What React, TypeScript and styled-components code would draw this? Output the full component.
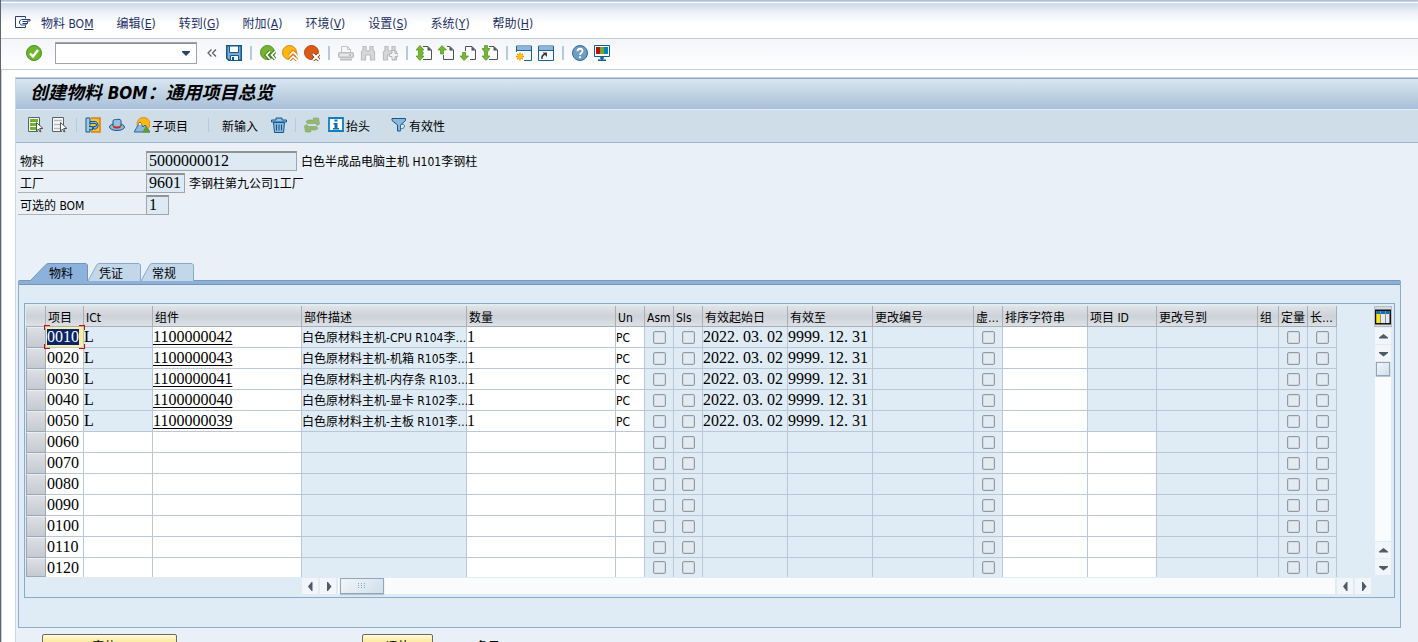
import React from 'react';
import styled, { createGlobalStyle, css } from 'styled-components';

const GlobalStyle = createGlobalStyle`
  * { box-sizing: border-box; }
  body {
    margin: 0;
    background: #e9f0f7;
    color: #000;
    font: 12px/16px 'DejaVu Sans Condensed', 'Noto Sans CJK SC', sans-serif;
  }
  button, input { font: inherit; color: inherit; }
`;

const Screen = styled.div`
  height: 100vh;
  overflow: hidden;
  display: flex;
  flex-direction: column;
  background: #fff;
  border-left: 1px solid #5f646c;
  box-shadow: inset 1px 0 0 #c9ccd2;
`;

const TopEdge = styled.div`
  flex: none;
  height: 4px;
  background: linear-gradient(#b3c1d3 0 1px, #c8d4e2 1px 2px, #fbfcfe 2px 3px, #d3deeb 3px 4px);
`;

const MenuBar = styled.nav`
  flex: none;
  height: 35px;
  display: flex;
  align-items: center;
  padding: 6px 0 0 14px;
  gap: 10px;
  background: linear-gradient(#cedaea, #ecf1f7 8px, #fff 20px);
  border-bottom: 1px solid #c6cad3;
  & > svg { margin-bottom: 4px; }
`;

const MenuList = styled.div`
  display: flex;
  gap: 23px;
`;

const MenuItem = styled.button`
  border: 0;
  padding: 0;
  background: none;
  color: #1c2f66;
  white-space: pre;
`;

const CommandBar = styled.div`
  flex: none;
  height: 31px;
  display: flex;
  align-items: center;
  gap: 6px;
  padding: 0 0 2px 25px;
  background: linear-gradient(#f3f5f9, #fff);
  border-bottom: 1px solid #c9cdd5;
`;

const IconButton = styled.button`
  flex: none;
  display: flex;
  width: 16px;
  height: 16px;
  border: 0;
  padding: 0;
  background: none;
  & > svg { display: block; }
`;

const Combo = styled.div`
  width: 142px;
  height: 22px;
  display: flex;
  align-items: center;
  margin: 0 1px 0 7px;
  padding: 0 5px 0 3px;
  border: 1px solid #a3a3a5;
  box-shadow: inset 0 1px 0 #8e9094;
  background: #fff;
`;

const ComboInput = styled.input`
  flex: 1;
  min-width: 0;
  border: 0;
  outline: 0;
  padding: 0;
  background: none;
`;

const Divider = styled.span<{ $wide?: boolean }>`
  flex: none;
  width: ${p => (p.$wide ? 2 : 1)}px;
  height: 14px;
  margin: 0 ${p => (p.$wide ? 2 : 0)}px;
  background: #b4cae0;
`;

const Workspace = styled.main`
  flex: 1;
  min-height: 0;
  margin: 7px 0 0 14px;
  border-left: 1px solid #ccd6e2;
  border-top: 1px solid #c5d0de;
  background: #e9f0f7;
`;

const TitleBar = styled.header`
  height: 32px;
  padding-left: 14px;
  border-top: 1px solid #93a8c0;
  border-bottom: 1px solid #e4edf5;
  background: linear-gradient(#d8e6f1, #c0d2e2 50%, #a9c0da);
`;

const Title = styled.h1`
  margin: 0;
  font: italic 700 18px/28px 'DejaVu Sans Condensed', 'Noto Sans CJK SC', sans-serif;
`;

const TitleLatin = styled.span`
  font-size: 17px;
`;

const AppBar = styled.div`
  height: 33px;
  display: flex;
  align-items: center;
  gap: 8px;
  padding: 0 0 2px 12px;
  background: #cfdde8;
  border-bottom: 1px solid #9fb5cb;
`;

const LabelButton = styled.button<{ $start?: number; $end?: number }>`
  flex: none;
  display: flex;
  align-items: center;
  gap: 2px;
  border: 0;
  padding: 0 ${p => p.$end ?? 0}px 0 ${p => p.$start ?? 0}px;
  background: none;
  & > span { padding-top: 3px; }
`;

const HeaderForm = styled.form`
  display: grid;
  gap: 2px;
  padding: 8px 0 0 2px;
`;

const FormRow = styled.div`
  height: 20px;
  display: flex;
`;

const FormLabel = styled.label`
  width: 128px;
  padding: 3px 0 0 2px;
  border-bottom: 1px solid #b0b3b6;
`;

const digits = css`
  font-family: 'Liberation Serif', 'Noto Sans CJK SC', serif;
  font-size: 16px;
`;

const FormField = styled.input<{ $width: number }>`
  ${digits}
  width: ${p => p.$width}px;
  height: 20px;
  padding: 0 2px 1px;
  border: 1px solid #a2a5a8;
  border-top: 2px solid #8f9396;
  outline: 0;
  background: #dde9f3;
`;

const FormText = styled.span`
  padding: 3px 0 0 4px;
`;

const TabStrip = styled.div`
  display: flex;
  margin: 48px 0 0 14px;
`;

const TabButton = styled.button<{ $width: number }>`
  display: grid;
  width: ${p => p.$width}px;
  height: 18px;
  border: 0;
  padding: 0;
  background: none;
  & > * { grid-area: 1 / 1; }
`;

const TabText = styled.span<{ $start: number }>`
  padding: 4px 0 0 ${p => p.$start}px;
  text-align: left;
  line-height: 14px;
`;

const TabPanel = styled.section`
  margin: 0 17px 0 2px;
  padding: 19px 5px 29px;
  border: 1px solid #8fadca;
  border-top: 3px solid #8eb0d6;
  border-radius: 2px 2px 0 0;
  box-shadow: inset 0 1px 0 #7395bb, 0 -1px 0 #7899bf;
  background: #dfebf5;
`;

const TableFrame = styled.div`
  border: 1px solid #8aaacb;
  padding: 2px 2px 3px 1px;
`;

const TableArea = styled.div`
  display: flex;
  justify-content: space-between;
`;

const Grid = styled.table`
  table-layout: fixed;
  width: 1311px;
  border-collapse: separate;
  border-spacing: 0;
`;

const HeadCell = styled.th`
  height: 21px;
  padding: 3px 0 0 2px;
  border-right: 1px solid #a5afbc;
  border-bottom: 1px solid #a5afbc;
  background: linear-gradient(#e1e4e6, #cdd2d9 50%, #dde1e4);
  font-weight: 400;
  text-align: left;
  line-height: 16px;
  white-space: nowrap;
  overflow: hidden;
`;

const RowCell = styled.td<{ $open?: boolean; $last?: boolean; $active?: boolean; $kind: string; $num?: boolean }>`
  position: relative;
  height: ${p => (p.$last ? 19 : 21)}px;
  padding: 0 0 0 ${p => (p.$kind === 'item' ? 1 : 0)}px;
  border-right: 1px solid #bac7d6;
  border-bottom: ${p => (p.$last ? 0 : 1)}px solid #bac7d6;
  background: ${p => (p.$active ? '#fdeea0' : p.$open ? '#fff' : '#dfebf5')};
  line-height: 16px;
  white-space: nowrap;
  ${p => p.$num && digits}
`;

const CellText = styled.span`
  display: block;
  padding-top: 2px;
`;

const Selector = styled.td`
  padding: 0;
  border: 1px solid #9ea7b4;
  border-top-color: #eceff2;
  background: linear-gradient(#dcdfe3, #c5cad2);
`;

const Corner = styled.i<{ $v: 'top' | 'bottom'; $h: 'left' | 'right' }>`
  position: absolute;
  z-index: 1;
  ${p => p.$v}: -2px;
  ${p => p.$h}: -2px;
  width: 6px;
  height: 5px;
  border: 0 solid #e00000;
  border-${p => p.$v}-width: 1px;
  border-${p => p.$h}-width: 1px;
`;

const Selected = styled.span`
  display: block;
  width: 32px;
  height: 16px;
  background: #0a246a;
  color: #fff;
`;

const CellLink = styled.a`
  color: #000;
  text-underline-offset: 2px;
`;

const DateText = styled.time`
  display: flex;
  gap: 4px;
`;

const Check = styled.input`
  appearance: none;
  display: block;
  width: 13px;
  height: 13px;
  margin: 0 auto;
  border: 1px solid #949a9e;
  border-radius: 2px;
  background: #e1ebf3;
  box-shadow: inset 0 0 0 1px #d2dbe2;
`;

const SideBar = styled.div`
  width: 18px;
  display: flex;
  flex-direction: column;
  align-items: center;
  gap: 1px;
  padding-bottom: 2px;
`;

const ConfigButton = styled.button`
  flex: none;
  width: 18px;
  height: 21px;
  padding: 0;
  border: 1px solid #b6bcc4;
  background: #d5dadf;
  display: grid;
  place-items: center;
`;

const ArrowButton = styled.button`
  flex: none;
  width: 16px;
  height: 16px;
  padding: 0;
  border: 0;
  background: #f2f6fa;
  display: grid;
  place-items: center;
`;

const Track = styled.div`
  flex: 1;
  background: #fafbfc;
`;

const Thumb = styled.div<{ $width: number; $height: number }>`
  flex: none;
  width: ${p => p.$width}px;
  height: ${p => p.$height}px;
  display: grid;
  place-items: center;
  border: 1px solid #93a6b8;
  background: linear-gradient(135deg, #f1f6fa, #d0dfea);
  box-shadow: 0 1px 1px #b9c4ce;
`;

const BottomScroll = styled.div`
  display: flex;
  gap: 2px;
  padding: 1px 21px 0 276px;
`;

const HorizontalTrack = styled(Track)`
  display: flex;
  padding-left: 2px;
`;

const Footer = styled.div`
  display: flex;
  align-items: flex-start;
  padding: 6px 0 0 26px;
`;

const FooterButton = styled.button<{ $width: number }>`
  width: ${p => p.$width}px;
  height: 22px;
  margin-right: 185px;
  padding: 4px 0 0;
  border: 1px solid #6c6a60;
  border-radius: 2px;
  background: linear-gradient(#fffbe0, #fdeeaa 5px, #f9e28a);
`;

const EntryInfo = styled.div`
  display: flex;
  gap: 8px;
  margin-left: -142px;
  padding-top: 5px;
`;

const EntryNumber = styled.span`
  width: 102px;
  text-align: right;
`;

/* ---------- icons ---------- */

const Icon = ({ children, w = 16, h = 16 }: { children: React.ReactNode; w?: number; h?: number }) => (
  <svg width={w} height={h} viewBox={`0 0 ${w} ${h}`} fill="none" aria-hidden="true">
    {children}
  </svg>
);

const MenuIcon = () => (
  <Icon w={16} h={12}>
    <path d="M10.500 2.500V.5H.5v11h10V9.500" stroke="#27406f" />
    <path d="M15 3.500H6.500L4.500 5v2.500l2 1.500H11V7.500h1.500V5.500H7.500M15 3.500v1.500h-3M7.500 7.500H11" stroke="#27406f" />
  </Icon>
);
const OkIcon = () => (
  <Icon>
    <circle cx="8" cy="8" r="7.500" fill="#6db52b" stroke="#4b8f22" />
    <path d="M4 8.500l3 3L12 5" stroke="#fff" strokeWidth="2.400" />
  </Icon>
);
const DropIcon = () => <Icon w={10} h={6}><path d="M1 1h8v1L5 6 1 2z" fill="#27406f" /></Icon>;
const CollapseIcon = () => (
  <Icon><path d="M7.500 4.500 4 8l3.500 3.500M12 4.500 8.500 8l3.500 3.500" stroke="#555a60" strokeWidth="1.200" /></Icon>
);
const SaveIcon = () => (
  <Icon>
    <path d="M.75.75h14.500v14.500H2.750L.75 13.250z" fill="#7fa9d0" stroke="#0f5a8c" strokeWidth="1.500" />
    <path d="M3.500 1h9v6.500h-9z" fill="#fff" stroke="#0f5a8c" />
    <path d="M4.500 10.500h8v5h-8z" fill="#eef4f9" stroke="#0f5a8c" />
    <path d="M6 12h2v3H6z" fill="#0f5a8c" />
  </Icon>
);
const BackIcon = () => (
  <Icon>
    <circle cx="7.500" cy="7.500" r="7" fill="#7ab32f" stroke="#4e8f25" />
    <path d="M10 6.500 6.500 10l3.500 4M15 6.500 11.500 10l3.500 4" stroke="#3f7d1d" strokeWidth="3.500" />
    <path d="M10 6.500 6.500 10l3.500 4M15 6.500 11.500 10l3.500 4" stroke="#fff" strokeWidth="1.700" />
  </Icon>
);
const ExitIcon = () => (
  <Icon>
    <circle cx="7.500" cy="7.500" r="7" fill="#fdb813" stroke="#d98a0b" />
    <path d="M7.500 10.500 11 7l4 3.500M7.500 15l3.500-3.500L15 15" stroke="#d9780b" strokeWidth="3.500" />
    <path d="M7.500 10.500 11 7l4 3.500M7.500 15l3.500-3.500L15 15" stroke="#fff" strokeWidth="1.700" />
  </Icon>
);
const CancelIcon = () => (
  <Icon>
    <circle cx="7.500" cy="7.500" r="7" fill="#d95b1c" stroke="#b5430f" />
    <path d="M9 9l6 6M15 9l-6 6" stroke="#9a3208" strokeWidth="3.800" />
    <path d="M9 9l6 6M15 9l-6 6" stroke="#fff" strokeWidth="2.200" />
  </Icon>
);
const PrintIcon = () => (
  <Icon>
    <path d="M3.500 8V1.500h6l3 3V8M9.500 1.500v3h3" fill="#f7f7f8" stroke="#c1c2c4" />
    <rect x=".75" y="7.750" width="14.500" height="4.500" rx="1" fill="#e8e8e9" stroke="#bcbdbf" strokeWidth="1.500" />
    <path d="M11 10h2M2 14.500h12" stroke="#bcbdbf" strokeWidth="2" />
  </Icon>
);
const binocular = 'M1.500 15V7l1.500-2V1.500h3V5l1 1h2l1-1V1.500h3V5l1.500 2v8h-4v-5H5.500v5z';
const FindIcon = () => <Icon><path d={binocular} fill="#d7d8d9" stroke="#bbbcbe" strokeWidth="1.200" /></Icon>;
const FindNextIcon = () => (
  <Icon>
    <path d={binocular} fill="#d7d8d9" stroke="#bbbcbe" strokeWidth="1.200" />
    <path d="M10 5.500h3v3h3v3h-3v3h-3v-3H7.500v-3H10z" fill="#f4f4f5" stroke="#b5b6b8" />
  </Icon>
);
type PageKind = 'first' | 'prev' | 'next' | 'last';
const pageArrows: Record<PageKind, string> = {
  first: 'M4 .5 8 5H5.500l2 3-2 3H8L4 15.500 0 11h2.500V5H0z',
  prev: 'M4 .5 8.500 5H5.500v4h-3V5H0z',
  next: 'M2.500 7.500h3V11H8.500L4 15.500 0 11h2.500z',
  last: 'M2.500 .5h3V3.500H8L5.500 7v4H8L4 15.500 0 11h2.500V7L0 3.500h2.500z',
};
const PageIcon = ({ kind }: { kind: PageKind }) => (
  <Icon>
    <path
      d={kind === 'prev' ? 'M5.500 10v4.500h10V5L12 1.500H9' : kind === 'next' ? 'M5.500 6V1.500H12L15.500 5v9.500H10' : 'M7 1.500h5L15.500 5v9.500H7'}
      fill="#fafbfc"
      stroke="#4f5357"
    />
    <path d="M11.500 1l4 4.500h-4z" fill="#4f5357" />
    <path d={pageArrows[kind]} fill="#78b82e" stroke="#4b8f22" strokeWidth=".7" />
  </Icon>
);
const NewWindowIcon = () => (
  <Icon>
    <path d="M.5 1h15v14.500H.5z" fill="#f3f7fb" stroke="#1c6194" />
    <path d="M1 1.500h14v4H1z" fill="#8fb6dc" />
    <path d="M0 5.500h16" stroke="#1c6194" />
    <path d="M-1 7h9v10h-9z" fill="#fff" />
    <path d="M4 7.500v8M0 11.500h8M1.200 8.700l5.600 5.600M6.800 8.700l-5.600 5.600" stroke="#f08a1d" strokeWidth="1.400" />
    <circle cx="4" cy="11.500" r="2.500" fill="#fdc300" />
  </Icon>
);
const ShortcutIcon = () => (
  <Icon>
    <path d="M.5 1h15v14.500H.5z" fill="#f6f9fc" stroke="#1c6194" />
    <path d="M1 1.500h14v4H1z" fill="#8fb6dc" />
    <path d="M0 5.500h16" stroke="#1c6194" />
    <path d="M4 14c-.5-3 .5-4 3-5" stroke="#3a3d40" strokeWidth="1.600" />
    <path d="M4.500 7.500H9V12z" fill="#3a3d40" />
  </Icon>
);
const HelpIcon = () => (
  <Icon>
    <circle cx="8" cy="8" r="7.500" fill="#6e9dc6" stroke="#2a6a9e" />
    <path d="M5.500 6.300C5.500 2.900 10.500 3 10.500 6c0 2-2.500 2-2.500 4M8 11.300v1.900" stroke="#fff" strokeWidth="1.800" />
  </Icon>
);
const MonitorIcon = () => (
  <Icon>
    <path d="M.5.500h15v11H.5z" fill="#fff" stroke="#0e5d93" />
    <path d="M2 2h4v7H2z" fill="#c00d0d" /><path d="M6 2h4v7H6z" fill="#6cae22" /><path d="M10 2h4v7h-4z" fill="#0a7fc4" />
    <path d="M6 13h4M8 12v3M4 15.300h8" stroke="#0e5d93" strokeWidth="1.500" />
  </Icon>
);
const SelectIcon = ({ on }: { on?: boolean }) => (
  <Icon>
    <path d="M10 14.500H.5V.5h11V8" fill="#f6f8fa" stroke="#5d6165" />
    <path d="M2 3.500h8M2 7.500h6M2 11.500h6" stroke={on ? '#6db52b' : '#b6babd'} strokeWidth={on ? 3 : 1.500} />
    <path d="M8.500 5.500v8.500l2-2 1.500 3 1-.5-1.300-3H15z" fill="#fff" stroke="#4f5357" />
  </Icon>
);
const LinkItemIcon = () => (
  <Icon>
    <path d="M6 1h9v14H6" fill="#fdc12c" stroke="#e07c12" strokeWidth="1.500" />
    <path d="M1 1h4v14H1z" fill="#a9c8e4" stroke="#0f5a8c" />
    <path d="M4 9.500h3.500V13L4 12.500M5 4.500h5.500a4 4 0 0 1 0 7.500H8.500V9.500h1.500a1.500 1.500 0 0 0 0-3H5z" fill="#8fb6dc" stroke="#0f5a8c" />
  </Icon>
);
const HatIcon = () => (
  <Icon>
    <ellipse cx="8" cy="10" rx="7.500" ry="3.500" fill="#8fb6dc" stroke="#0f5a8c" />
    <path d="M4 9V3.500C6 1.800 7 3 8 2.500S11 2 12 3.500V9c-2 2-6 2-8 0z" fill="#9bbfe0" stroke="#0f5a8c" />
    <path d="M4 8c2 2 6 2 8 0v2c-2 2-6 2-8 0z" fill="#c8300f" />
  </Icon>
);
const MountainIcon = () => (
  <Icon>
    <circle cx="9.500" cy="7" r="6.500" fill="#fdb813" stroke="#e8890c" />
    <path d="M0 15 6 5l3 5 2-2 5 7z" fill="#8fb6dc" stroke="#2a6a9e" />
    <path d="M8 15.500 12 9l4 6.500z" fill="#5c9f24" />
    <path d="M5 8l1-2 1 2" stroke="#fff" />
  </Icon>
);
const TrashIcon = () => (
  <Icon>
    <path d="M2.500 5.500h11l-1 10h-9z" fill="#8fb6dc" stroke="#0f5a8c" />
    <path d="M5.500 7.500v6M8 7.500v6M10.500 7.500v6" stroke="#0f5a8c" />
    <path d="M.5 5V3h4.500V1h6v2h4.500v2z" fill="#9bbfe0" stroke="#0f5a8c" />
  </Icon>
);
const SwapIcon = () => (
  <Icon>
    <path
      d="M2 4.500 4.500 3H10L9 1h5.500L15.500 7 13 8.500 12 6.500H3.500zM14 11.500 11.500 13H6l1 2H1.500L.5 9 3 7.500 4 9.500h8.500z"
      fill="#94b872"
      stroke="#7fa65c"
      strokeWidth=".6"
    />
  </Icon>
);
const InfoIcon = () => (
  <Icon>
    <path d="M1 1h14v13H1z" fill="#fff" stroke="#0a7fc4" strokeWidth="1.800" />
    <path d="M6.500 2.500h3v2h-3zM5.500 6h4v5H11v1.500H5V11h1.500V7.500h-1z" fill="#0f6fae" />
  </Icon>
);
const FunnelIcon = () => (
  <Icon>
    <path d="M1 1.500h13.500v2L9.500 8v6h-3V8L1 3.500z" fill="#8fb6dc" stroke="#0f5a8c" />
    <path d="M9.500 14V8c3-2 5 .5 3.500 2.500-.8 1.200-2 1-3.500 1" fill="#dce8f2" stroke="#2a6a9e" />
  </Icon>
);
const ConfigIcon = () => (
  <Icon w={16} h={16}>
    <path d="M.75 1.250h14.500v13.500H.75z" fill="#e7e9ec" stroke="#111" strokeWidth="1.500" />
    <path d="M1.500 2h13v3h-13z" fill="#0a6fb4" />
    <path d="M1.500 5h4v9h-4z" fill="#ffe600" />
    <path d="M5.500 2v12M10.500 2v12" stroke="#8a9097" />
  </Icon>
);
const arrowPaths = {
  up: 'M1 7.500h9v-1L5.500 3 1 6.500z',
  down: 'M1 4h9v1L5.500 8.500 1 5z',
  left: 'M7.500 1v9h-1L3 5.500 6.500 1z',
  right: 'M4 1v9h1l3.500-4.500L5 1z',
};
const Arrow = ({ dir }: { dir: keyof typeof arrowPaths }) => (
  <ArrowButton aria-label={dir}><Icon w={11} h={11}><path d={arrowPaths[dir]} fill="#4a5b6b" /></Icon></ArrowButton>
);
const GripIcon = () => (
  <Icon w={10} h={6}>
    <path d="M1 .5h1M4 .5h1M7 .5h1M1 2.500h1M4 2.500h1M7 2.500h1M1 4.500h1M4 4.500h1M7 4.500h1" stroke="#8fa3b5" />
  </Icon>
);

/* Tab outlines: a slanted left shoulder and a square right edge. */
const TabShape = ({ width, slope, active }: { width: number; slope: number; active?: boolean }) => (
  <Icon w={width} h={18}>
    <path
      d={`M0 18 ${slope - 2} 1.500 ${slope} .5H${width - 2}L${width - .5} 2V18`}
      fill={active ? '#8cb1dc' : '#c3d7ea'}
      stroke={active ? '#6f94bd' : '#88a9ca'}
    />
  </Icon>
);

/* ---------- data ---------- */

const menus: [string, string][] = [
  ['编辑', 'E'], ['转到', 'G'], ['附加', 'A'], ['环境', 'V'], ['设置', 'S'], ['系统', 'Y'], ['帮助', 'H'],
];

type Kind = 'item' | 'type' | 'part' | 'desc' | 'qty' | 'unit' | 'check' | 'from' | 'to' | 'none' | 'open' | 'id';
const columns: { title: string; width: number; kind: Kind }[] = [
  { title: '项目', width: 38, kind: 'item' },
  { title: 'ICt', width: 69, kind: 'type' },
  { title: '组件', width: 149, kind: 'part' },
  { title: '部件描述', width: 165, kind: 'desc' },
  { title: '数量', width: 149, kind: 'qty' },
  { title: 'Un', width: 29, kind: 'unit' },
  { title: 'Asm', width: 29, kind: 'check' },
  { title: 'SIs', width: 29, kind: 'check' },
  { title: '有效起始日', width: 85, kind: 'from' },
  { title: '有效至', width: 85, kind: 'to' },
  { title: '更改编号', width: 101, kind: 'none' },
  { title: '虚…', width: 29, kind: 'check' },
  { title: '排序字符串', width: 85, kind: 'open' },
  { title: '项目 ID', width: 69, kind: 'id' },
  { title: '更改号到', width: 101, kind: 'none' },
  { title: '组', width: 21, kind: 'none' },
  { title: '定量', width: 29, kind: 'check' },
  { title: '长…', width: 29, kind: 'check' },
];

const parts = [
  { part: '1100000042', desc: '白色原材料主机-CPU R104李…' },
  { part: '1100000043', desc: '白色原材料主机-机箱 R105李…' },
  { part: '1100000041', desc: '白色原材料主机-内存条 R103…' },
  { part: '1100000040', desc: '白色原材料主机-显卡 R102李…' },
  { part: '1100000039', desc: '白色原材料主机-主板 R101李…' },
];
const rows = Array.from({ length: 12 }, (_, i) => ({
  item: String((i + 1) * 10).padStart(4, '0'),
  ...parts[i],
}));

const DateValue = ({ value }: { value: string }) => {
  const [y, m, d] = value.split('.');
  return <DateText dateTime={`${y}-${m}-${d}`}><span>{y}.</span><span>{m}.</span><span>{d}</span></DateText>;
};

const content = (kind: Kind, row: (typeof rows)[number], index: number, title: string) => {
  if (kind === 'item') {
    return index === 0 ? (
      <>
        <Selected>{row.item}</Selected>
        <Corner $v="top" $h="left" />
        <Corner $v="top" $h="right" />
        <Corner $v="bottom" $h="left" />
        <Corner $v="bottom" $h="right" />
      </>
    ) : row.item;
  }
  if (kind === 'check') return <Check type="checkbox" aria-label={`${title} ${row.item}`} />;
  if (!row.part) return null;
  switch (kind) {
    case 'type': return 'L';
    case 'part': return <CellLink href="#">{row.part}</CellLink>;
    case 'desc': return <CellText>{row.desc}</CellText>;
    case 'qty': return '1';
    case 'unit': return <CellText>PC</CellText>;
    case 'from': return <DateValue value="2022.03.02" />;
    case 'to': return <DateValue value="9999.12.31" />;
    default: return null;
  }
};

const isOpen = (kind: Kind, filled: boolean) =>
  ['item', 'part', 'qty', 'unit', 'open'].includes(kind) || (!filled && (kind === 'type' || kind === 'id'));
const isNumeric = (kind: Kind) => ['item', 'type', 'part', 'qty', 'from', 'to'].includes(kind);

export default function App() {
  return (
    <Screen>
      <GlobalStyle />
      <TopEdge />
      <MenuBar>
        <MenuIcon />
        <MenuList>
          <MenuItem>物料 BO<u>M</u></MenuItem>
          {menus.map(([name, key]) => <MenuItem key={key}>{name}(<u>{key}</u>)</MenuItem>)}
        </MenuList>
      </MenuBar>
      <CommandBar>
        <IconButton aria-label="Enter"><OkIcon /></IconButton>
        <Combo>
          <ComboInput aria-label="Command" />
          <DropIcon />
        </Combo>
        <IconButton aria-label="Collapse"><CollapseIcon /></IconButton>
        <IconButton aria-label="Save"><SaveIcon /></IconButton>
        <Divider $wide />
        <IconButton aria-label="Back"><BackIcon /></IconButton>
        <IconButton aria-label="Exit"><ExitIcon /></IconButton>
        <IconButton aria-label="Cancel"><CancelIcon /></IconButton>
        <Divider $wide />
        <IconButton aria-label="Print"><PrintIcon /></IconButton>
        <IconButton aria-label="Find"><FindIcon /></IconButton>
        <IconButton aria-label="Find next"><FindNextIcon /></IconButton>
        <Divider $wide />
        <IconButton aria-label="First page"><PageIcon kind="first" /></IconButton>
        <IconButton aria-label="Previous page"><PageIcon kind="prev" /></IconButton>
        <IconButton aria-label="Next page"><PageIcon kind="next" /></IconButton>
        <IconButton aria-label="Last page"><PageIcon kind="last" /></IconButton>
        <Divider $wide />
        <IconButton aria-label="New session"><NewWindowIcon /></IconButton>
        <IconButton aria-label="Shortcut"><ShortcutIcon /></IconButton>
        <Divider $wide />
        <IconButton aria-label="Help"><HelpIcon /></IconButton>
        <IconButton aria-label="Layout"><MonitorIcon /></IconButton>
      </CommandBar>
      <Workspace>
        <TitleBar>
          <Title>创建物料 <TitleLatin>BOM</TitleLatin>：通用项目总览</Title>
        </TitleBar>
        <AppBar>
          <IconButton aria-label="Select all"><SelectIcon on /></IconButton>
          <IconButton aria-label="Deselect all"><SelectIcon /></IconButton>
          <Divider />
          <IconButton aria-label="Item"><LinkItemIcon /></IconButton>
          <IconButton aria-label="Header details"><HatIcon /></IconButton>
          <LabelButton $start={1} $end={12}><MountainIcon /><span>子项目</span></LabelButton>
          <Divider />
          <LabelButton $start={5} $end={5}><span>新输入</span></LabelButton>
          <IconButton aria-label="Delete"><TrashIcon /></IconButton>
          <Divider />
          <IconButton aria-label="Swap"><SwapIcon /></IconButton>
          <LabelButton $end={13}><InfoIcon /><span>抬头</span></LabelButton>
          <LabelButton><FunnelIcon /><span>有效性</span></LabelButton>
        </AppBar>
        <HeaderForm>
          <FormRow>
            <FormLabel htmlFor="material">物料</FormLabel>
            <FormField id="material" $width={151} readOnly value="5000000012" />
            <FormText>白色半成品电脑主机 H101李钢柱</FormText>
          </FormRow>
          <FormRow>
            <FormLabel htmlFor="plant">工厂</FormLabel>
            <FormField id="plant" $width={39} readOnly value="9601" />
            <FormText>李钢柱第九公司1工厂</FormText>
          </FormRow>
          <FormRow>
            <FormLabel htmlFor="alt">可选的 BOM</FormLabel>
            <FormField id="alt" $width={23} readOnly value="1" />
          </FormRow>
        </HeaderForm>
        <TabStrip role="tablist">
          <TabButton role="tab" aria-selected $width={58}>
            <TabShape width={58} slope={18} active /><TabText $start={19}>物料</TabText>
          </TabButton>
          <TabButton role="tab" $width={53}>
            <TabShape width={53} slope={11} /><TabText $start={11}>凭证</TabText>
          </TabButton>
          <TabButton role="tab" $width={53}>
            <TabShape width={53} slope={11} /><TabText $start={11}>常规</TabText>
          </TabButton>
        </TabStrip>
        <TabPanel>
          <TableFrame>
            <TableArea>
              <Grid>
                <colgroup>
                  <col width={20} />
                  {columns.map((c, i) => <col key={i} width={c.width} />)}
                </colgroup>
                <thead>
                  <tr>
                    <HeadCell aria-label="Select" />
                    {columns.map((c, i) => <HeadCell key={i}>{c.title}</HeadCell>)}
                  </tr>
                </thead>
                <tbody>
                  {rows.map((row, r) => (
                    <tr key={row.item}>
                      <Selector />
                      {columns.map((c, i) => (
                        <RowCell
                          key={i}
                          $kind={c.kind}
                          $open={isOpen(c.kind, !!row.part)}
                          $num={isNumeric(c.kind)}
                          $active={r === 0 && i === 0}
                          $last={r === rows.length - 1}
                        >
                          {content(c.kind, row, r, c.title)}
                        </RowCell>
                      ))}
                    </tr>
                  ))}
                </tbody>
              </Grid>
              <SideBar>
                <ConfigButton aria-label="Configuration"><ConfigIcon /></ConfigButton>
                <Arrow dir="up" />
                <Arrow dir="down" />
                <Thumb $width={14} $height={14} />
                <Track style={{ width: 16 }} />
                <Arrow dir="up" />
                <Arrow dir="down" />
              </SideBar>
            </TableArea>
            <BottomScroll>
              <Arrow dir="left" />
              <Arrow dir="right" />
              <HorizontalTrack>
                <Thumb $width={44} $height={16}><GripIcon /></Thumb>
              </HorizontalTrack>
              <Arrow dir="left" />
              <Arrow dir="right" />
            </BottomScroll>
          </TableFrame>
        </TabPanel>
        <Footer>
          <FooterButton $width={135}>定位...</FooterButton>
          <FooterButton $width={71}>评估</FooterButton>
          <EntryInfo>
            <span>条目</span>
            <EntryNumber>1</EntryNumber>
            <span>/ 6</span>
          </EntryInfo>
        </Footer>
      </Workspace>
    </Screen>
  );
}
